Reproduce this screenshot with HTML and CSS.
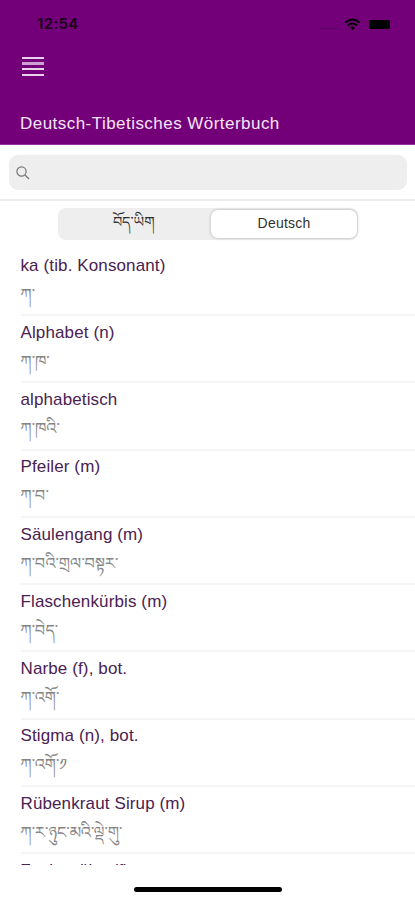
FILE: index.html
```html
<!DOCTYPE html>
<html lang="de">
<head>
<meta charset="utf-8">
<title>Deutsch-Tibetisches Wörterbuch</title>
<link rel="stylesheet" href="styles.css">
</head>
<body>
<header class="header">
  <div class="status">
    <span class="time">12:54</span>
    <div class="indicators">
      <span class="signal"></span>
      <svg class="wifi" viewBox="0 0 18 13"><path d="M1.4 4.7Q9-2.1 16.6 4.7M4 7.5Q9 3.2 14 7.5" fill="none" stroke="#000" stroke-width="2"/><path d="M6.3 9.8Q9 7.5 11.7 9.8L9 12.5Z"/></svg>
      <span class="battery"></span>
    </div>
  </div>
  <svg class="menu" viewBox="0 0 23 21" shape-rendering="crispEdges"><path d="M0 1h22v2H0zM0 12h22v2H0zM0 18h22v2H0z" fill="#e9d2ee"/><path d="M0 6h22v3H0z" fill="#ce9fd5"/></svg>
  <h1 class="title">Deutsch-Tibetisches Wörterbuch</h1>
</header>
<div class="search-area">
  <div class="search"><svg class="glass" viewBox="0 0 15 15" fill="none" stroke="#77777a" stroke-width="1.2"><circle cx="5.5" cy="5.5" r="4.6"/><path d="M9 9L13 13"/></svg></div>
</div>
<div class="tabs"><div class="tab tibetan" lang="bo">བོད་ཡིག</div><div class="tab active">Deutsch</div></div>
<main class="list">
  <div class="entry"><div class="word">ka (tib. Konsonant)</div><div class="tibetan" lang="bo">ཀ་</div></div>
  <div class="entry"><div class="word">Alphabet (n)</div><div class="tibetan" lang="bo">ཀ་ཁ་</div></div>
  <div class="entry"><div class="word">alphabetisch</div><div class="tibetan" lang="bo">ཀ་ཁའི་</div></div>
  <div class="entry"><div class="word">Pfeiler (m)</div><div class="tibetan" lang="bo">ཀ་བ་</div></div>
  <div class="entry"><div class="word">Säulengang (m)</div><div class="tibetan" lang="bo">ཀ་བའི་གྲལ་བསྟར་</div></div>
  <div class="entry"><div class="word">Flaschenkürbis (m)</div><div class="tibetan" lang="bo">ཀ་བེད་</div></div>
  <div class="entry"><div class="word">Narbe (f), bot.</div><div class="tibetan" lang="bo">ཀ་འགོ་</div></div>
  <div class="entry"><div class="word">Stigma (n), bot.</div><div class="tibetan" lang="bo">ཀ་འགོ་༡</div></div>
  <div class="entry"><div class="word">Rübenkraut Sirup (m)</div><div class="tibetan" lang="bo">ཀ་ར་ཉུང་མའི་ལྡེ་གུ་</div></div>
  <div class="entry"><div class="word">Zuckerrübe (f)</div></div>
</main>
<footer class="home"><span class="home-bar"></span></footer>
</body>
</html>
```
FILE: styles.css
```css
* { box-sizing: border-box; }
body { margin: 0; width: 415px; height: 900px; overflow: hidden; background: #fff; font-family: "Liberation Sans", Arial, sans-serif; display: flex; flex-direction: column; }
.header { height: 145px; flex: none; background: #730078; border-bottom: 1px solid #93359a; padding: 14px 20px 0 20px; }
.status { display: flex; height: 20px; justify-content: space-between; align-items: center; }
.time { font: 600 15px/20px Inter, sans-serif; margin-left: 17px; letter-spacing: .35px; color: #17001a; }
.indicators { display: flex; align-items: center; padding-right: 5px; }
.signal { width: 18px; border-top: 1px dotted #570060; margin: 8px 7px 0 0; }
.wifi { width: 17px; height: 13px; margin-right: 8px; }
.battery { width: 21px; height: 9px; border-radius: 2px; background: #000; }
.menu { display: block; width: 23px; height: 21px; margin: 22px 0 0 2px; }
.title { margin: 36px 0 0; font-size: 17px; line-height: 22px; font-weight: 400; color: #f5e5f6; letter-spacing: .46px; white-space: nowrap; }
.search-area { height: 56px; flex: none; padding: 10px 8px 0 9px; border-bottom: 2px solid #ececec; }
.search { height: 35px; border-radius: 9px; background: #eee; padding: 11px 7px; }
.glass { display: block; width: 15px; height: 15px; }
.tabs { width: 300px; height: 32px; flex: none; margin: 7px 0 0 58px; border-radius: 8px; background: #eee; display: flex; }
.tab { flex: 1; text-align: center; font-size: 14px; line-height: 30px; letter-spacing: .2px; color: #303030; }
.tab.tibetan { font-size: 14.5px; line-height: 37px; letter-spacing: 0; }
.tab.active { flex: 0 0 146px; margin: 2px 1px 2px 2px; border-radius: 7px; background: #fff; line-height: 26px; box-shadow: 0 0 3px #aaa; }
.list { height: 617px; flex: none; margin-top: 8px; padding-left: 20.5px; overflow: hidden; }
.entry { height: 67.25px; padding-top: 7.5px; }
.word { height: 20px; font-size: 17px; line-height: 20px; letter-spacing: .12px; color: #4b2151; white-space: nowrap; }
.tibetan { font-family: "Noto Serif Tibetan", "Noto Sans Tibetan", "Noto Sans", serif; }
.entry .tibetan { height: 40.5px; padding-top: 9px; font-size: 16px; line-height: 30px; color: #858585; white-space: nowrap; border-bottom: 2px solid #f5f5f5; }
.home { flex: 1; display: flex; justify-content: center; align-items: flex-start; padding-top: 22px; }
.home-bar { width: 148px; height: 5px; border-radius: 3px; background: #000; }
```
